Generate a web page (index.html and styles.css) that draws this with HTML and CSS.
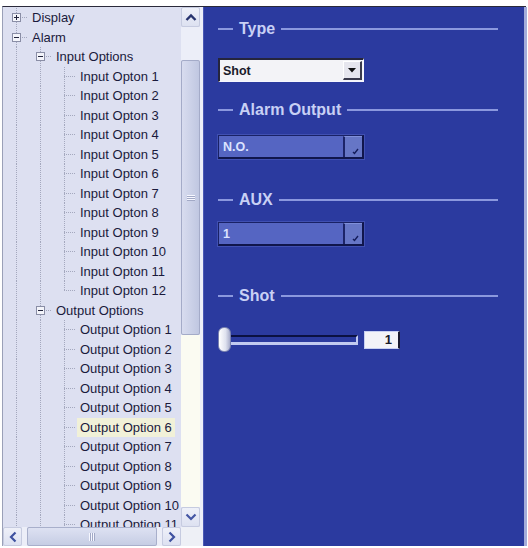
FILE: index.html
```html
<!DOCTYPE html>
<html>
<head>
<meta charset="utf-8">
<link rel="stylesheet" href="styles.css">
</head>
<body>
<div class="frame">
  <div class="tree">
    <div class="tree-body">
      <div class="row"><span class="c t"><span class="box plus"></span></span><span class="label">Display</span></div>
      <div class="row"><span class="c t"><span class="box minus"></span></span><span class="label">Alarm</span></div>
      <div class="row"><span class="c v"></span><span class="c t"><span class="box minus"></span></span><span class="label">Input Options</span></div>
      <div class="row"><span class="c v"></span><span class="c v"></span><span class="c t"></span><span class="label">Input Opton 1</span></div>
      <div class="row"><span class="c v"></span><span class="c v"></span><span class="c t"></span><span class="label">Input Opton 2</span></div>
      <div class="row"><span class="c v"></span><span class="c v"></span><span class="c t"></span><span class="label">Input Opton 3</span></div>
      <div class="row"><span class="c v"></span><span class="c v"></span><span class="c t"></span><span class="label">Input Opton 4</span></div>
      <div class="row"><span class="c v"></span><span class="c v"></span><span class="c t"></span><span class="label">Input Opton 5</span></div>
      <div class="row"><span class="c v"></span><span class="c v"></span><span class="c t"></span><span class="label">Input Opton 6</span></div>
      <div class="row"><span class="c v"></span><span class="c v"></span><span class="c t"></span><span class="label">Input Opton 7</span></div>
      <div class="row"><span class="c v"></span><span class="c v"></span><span class="c t"></span><span class="label">Input Opton 8</span></div>
      <div class="row"><span class="c v"></span><span class="c v"></span><span class="c t"></span><span class="label">Input Opton 9</span></div>
      <div class="row"><span class="c v"></span><span class="c v"></span><span class="c t"></span><span class="label">Input Opton 10</span></div>
      <div class="row"><span class="c v"></span><span class="c v"></span><span class="c t"></span><span class="label">Input Opton 11</span></div>
      <div class="row"><span class="c v"></span><span class="c v"></span><span class="c l"></span><span class="label">Input Opton 12</span></div>
      <div class="row"><span class="c v"></span><span class="c t"><span class="box minus"></span></span><span class="label">Output Options</span></div>
      <div class="row"><span class="c v"></span><span class="c v"></span><span class="c t"></span><span class="label">Output Option 1</span></div>
      <div class="row"><span class="c v"></span><span class="c v"></span><span class="c t"></span><span class="label">Output Option 2</span></div>
      <div class="row"><span class="c v"></span><span class="c v"></span><span class="c t"></span><span class="label">Output Option 3</span></div>
      <div class="row"><span class="c v"></span><span class="c v"></span><span class="c t"></span><span class="label">Output Option 4</span></div>
      <div class="row"><span class="c v"></span><span class="c v"></span><span class="c t"></span><span class="label">Output Option 5</span></div>
      <div class="row"><span class="c v"></span><span class="c v"></span><span class="c t"></span><span class="label sel">Output Option 6</span></div>
      <div class="row"><span class="c v"></span><span class="c v"></span><span class="c t"></span><span class="label">Output Option 7</span></div>
      <div class="row"><span class="c v"></span><span class="c v"></span><span class="c t"></span><span class="label">Output Option 8</span></div>
      <div class="row"><span class="c v"></span><span class="c v"></span><span class="c t"></span><span class="label">Output Option 9</span></div>
      <div class="row"><span class="c v"></span><span class="c v"></span><span class="c t"></span><span class="label">Output Option 10</span></div>
      <div class="row"><span class="c v"></span><span class="c v"></span><span class="c t"></span><span class="label">Output Option 11</span></div>
    </div>
    <div class="vscroll">
      <div class="sb-btn"><svg width="12" height="8" viewBox="0 0 12 8"><polyline points="1.5,7 6,2.5 10.5,7" fill="none" stroke="#27336e" stroke-width="2.4"/></svg></div>
      <div class="track-top"></div>
      <div class="vthumb"><span class="grip"></span></div>
      <div class="track-bot"></div>
      <div class="sb-btn"><svg width="12" height="8" viewBox="0 0 12 8"><polyline points="1.5,1.5 6,6 10.5,1.5" fill="none" stroke="#4456a4" stroke-width="2.2"/></svg></div>
    </div>
    <div class="hscroll">
      <div class="sb-btn hbtn"><svg width="8" height="12" viewBox="0 0 8 12"><polyline points="6.5,1.5 2,6 6.5,10.5" fill="none" stroke="#3f52a0" stroke-width="2.2"/></svg></div>
      <div class="htrack-a"></div>
      <div class="hthumb"><span class="hgrip"></span></div>
      <div class="htrack-b"></div>
      <div class="sb-btn hbtn"><svg width="8" height="12" viewBox="0 0 8 12"><polyline points="1.5,1.5 6,6 1.5,10.5" fill="none" stroke="#3f52a0" stroke-width="2.2"/></svg></div>
    </div>
    <div class="corner"></div>
  </div>

  <div class="panel">
    <div class="head h-type">Type</div>
    <div class="select light s-type">
      <span class="value">Shot</span>
      <span class="btn light-btn"><svg width="8" height="5" viewBox="0 0 8 5"><polygon points="0,0 8,0 4,4.5" fill="#111"/></svg></span>
    </div>

    <div class="head h-out">Alarm Output</div>
    <div class="select blue s-out">
      <span class="value">N.O.</span>
      <span class="btn blue-btn"><svg width="10" height="10" viewBox="0 0 10 10"><polyline points="3,7 4.5,8.5 8,4" fill="none" stroke="#141c5a" stroke-width="1.4"/></svg></span>
    </div>

    <div class="head h-aux">AUX</div>
    <div class="select blue s-aux">
      <span class="value">1</span>
      <span class="btn blue-btn"><svg width="10" height="10" viewBox="0 0 10 10"><polyline points="3,7 4.5,8.5 8,4" fill="none" stroke="#141c5a" stroke-width="1.4"/></svg></span>
    </div>

    <div class="head h-shot">Shot</div>
    <div class="slider">
      <span class="thumb"></span>
      <span class="track"></span>
      <span class="num">1</span>
    </div>
  </div>
</div>
</body>
</html>
```

FILE: styles.css
```css
* { box-sizing: border-box; }

body {
  margin: 0;
  background: #ffffff;
  font-family: "Liberation Sans", Arial, sans-serif;
}

.frame {
  display: flex;
  width: 524px;
  height: 540px;
  margin: 6px 0 0 2px;
  border-top: 1px solid #2a2a3a;
  border-left: 1px solid #9aa0b8;
}

/* ---------- tree ---------- */
.tree {
  width: 200px;
  flex: none;
  display: grid;
  grid-template-columns: 178px 19px;
  grid-template-rows: 520px 19px;
  border-right: 3px solid #eceef8;
  background: #dde0f1;
}

.tree-body {
  overflow: hidden;
  padding: 1px 0 0 1px;
  color: #1a1a3c;
  font-size: 13px;
}

.row {
  display: flex;
  height: 19.5px;
  line-height: 19.5px;
  white-space: nowrap;
}

.c {
  width: 24px;
  flex: none;
  display: flex;
  align-items: center;
  justify-content: center;
  padding-left: 1px;
}

.v {
  background: repeating-linear-gradient(#a4a8be 0 1px, transparent 1px 2px) 12px 0 / 1px 100% no-repeat;
}

.t {
  background:
    repeating-linear-gradient(#a4a8be 0 1px, transparent 1px 2px) 12px 0 / 1px 100% no-repeat,
    repeating-linear-gradient(to right, #a4a8be 0 1px, transparent 1px 2px) 12px 50% / 12px 1px no-repeat;
}

.l {
  background:
    repeating-linear-gradient(#a4a8be 0 1px, transparent 1px 2px) 12px 0 / 1px 50% no-repeat,
    repeating-linear-gradient(to right, #a4a8be 0 1px, transparent 1px 2px) 12px 50% / 12px 1px no-repeat;
}

.box {
  width: 9px;
  height: 9px;
  border: 1px solid #8a8ea6;
  background-color: #f3f4fa;
}

.box.minus {
  background-image: linear-gradient(#22243c, #22243c);
  background-size: 5px 1px;
  background-position: center;
  background-repeat: no-repeat;
}

.box.plus {
  background-image: linear-gradient(#22243c, #22243c), linear-gradient(#22243c, #22243c);
  background-size: 5px 1px, 1px 5px;
  background-position: center, center;
  background-repeat: no-repeat;
}

.label {
  padding: 0 3px;
  margin-left: 1px;
}

.label.sel {
  background: #f1f1d8;
}

/* ---------- scrollbars ---------- */
.vscroll {
  display: flex;
  flex-direction: column;
}

.sb-btn {
  height: 20px;
  flex: none;
  display: flex;
  align-items: center;
  justify-content: center;
  background: linear-gradient(#eef0f9, #dde1f1);
  border: 1px solid #c6cbe0;
  border-radius: 2px;
}

.track-top {
  height: 33px;
  background: #eceef8;
}

.vthumb {
  height: 275px;
  display: flex;
  align-items: center;
  justify-content: center;
  background: linear-gradient(to right, #d8dcef, #c0c7e1);
  border: 1px solid #a4abc8;
  border-radius: 2px;
}

.grip {
  width: 8px;
  height: 6px;
  background: repeating-linear-gradient(#f6f7ff 0 1px, #a2a9c6 1px 2px);
}

.track-bot {
  flex: 1;
  background: #fbfbf2;
}

.hscroll {
  display: flex;
}

.hbtn {
  height: auto;
  width: 19px;
}

.htrack-a {
  width: 5px;
  background: #eceef8;
}

.hthumb {
  width: 130px;
  display: flex;
  align-items: center;
  justify-content: center;
  background: linear-gradient(#dde1f2, #c6cde4);
  border: 1px solid #a8afcb;
  border-radius: 2px;
}

.hgrip {
  width: 6px;
  height: 8px;
  background: repeating-linear-gradient(to right, #f6f7ff 0 1px, #a2a9c6 1px 2px);
}

.htrack-b {
  flex: 1;
  background: #eceef8;
}

.corner {
  background: #eef0f6;
}

/* ---------- right panel ---------- */
.panel {
  flex: 1;
  display: flex;
  flex-direction: column;
  align-items: flex-start;
  padding: 12px 26px 0 14px;
  background: #2b3a9f;
  border-left: 1px solid #4a58b4;
  border-right: 3px solid #a4acda;
}

.head {
  display: flex;
  align-items: center;
  gap: 6px;
  width: 280px;
  height: 20px;
  color: #c8d0f5;
  font-size: 16px;
  font-weight: bold;
}

.head::before {
  content: "";
  width: 15px;
  height: 2px;
  background: #8b98de;
}

.head::after {
  content: "";
  flex: 1;
  height: 2px;
  background: #8b98de;
}

.h-out { margin-top: 18px; }
.h-aux { margin-top: 31px; }
.h-shot { margin-top: 40px; }

.s-type { margin-top: 19px; }
.s-out { margin-top: 15px; }
.s-aux { margin-top: 12px; }

.select {
  width: 146px;
  height: 24px;
  display: flex;
  align-items: center;
  justify-content: space-between;
}

.select .value {
  padding-left: 3px;
  font-size: 12.5px;
  font-weight: bold;
}

.select.light {
  background: #f3f3f7;
  border-style: solid;
  border-width: 2px 1px 1px 2px;
  border-color: #25253c #f6f6ff #f6f6ff #25253c;
}

.select.light .value {
  color: #1a1a2a;
}

.select.blue {
  background: #5565c2;
  border-style: solid;
  border-width: 1px 2px 2px 1px;
  border-color: #1a2266 #10164c #10164c #1a2266;
  box-shadow: 0 0 0 1px #4050b2;
}

.select.blue .value {
  color: #dce3ff;
  padding-left: 4px;
}

.btn {
  width: 19px;
  height: 19px;
  display: flex;
  align-items: center;
  justify-content: center;
}

.light-btn {
  margin-right: 1px;
  background: #e6e6ee;
  border-style: solid;
  border-width: 1px 2px 2px 1px;
  border-color: #ffffff #3a3a4c #3a3a4c #ffffff;
}

.blue-btn {
  height: 21px;
  width: 19px;
  background: #6676c6;
  border-left: 2px solid #1c2468;
  border-top: 1px solid #8090da;
  align-items: flex-end;
  justify-content: flex-end;
  padding: 0 2px 2px 0;
}

.slider {
  display: flex;
  align-items: center;
  margin-top: 21px;
}

.thumb {
  width: 13px;
  height: 25px;
  border-radius: 6px;
  border: 1px solid #7a82b0;
  background: linear-gradient(to right, #ffffff, #dfe2ef 60%, #a9aecb);
}

.track {
  width: 127px;
  height: 10px;
  border-top: 2px solid #0b1142;
  border-bottom: 3px solid #c2caf0;
  border-right: 2px solid #c2caf0;
}

.num {
  width: 36px;
  height: 18px;
  margin-left: 6px;
  background: #f3f3f8;
  border: 1px solid #c8d0f2;
  border-right: 2px solid #1a1a30;
  color: #1a1a2a;
  font-size: 13px;
  font-weight: bold;
  line-height: 16px;
  text-align: right;
  padding-right: 6px;
}
```
